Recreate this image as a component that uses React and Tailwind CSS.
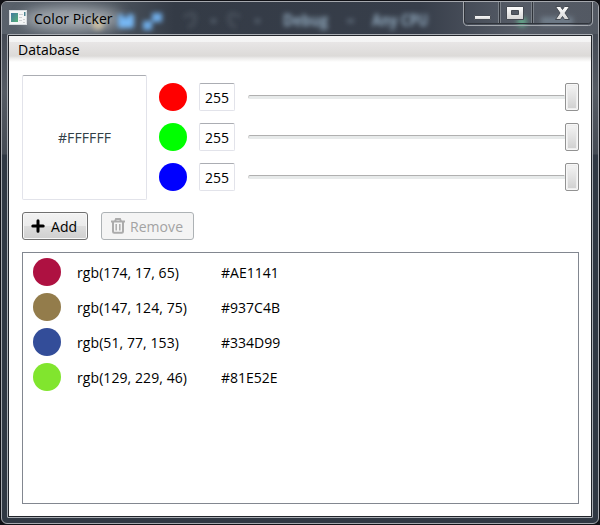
import React from 'react';

const channels = [
  { name: 'Red', fill: 'bg-[#ff0000]' },
  { name: 'Green', fill: 'bg-[#00ff00]' },
  { name: 'Blue', fill: 'bg-[#0000ff]' },
];

const colors = [
  { rgb: 'rgb(174, 17, 65)', hex: '#AE1141', fill: 'bg-[#ae1141]' },
  { rgb: 'rgb(147, 124, 75)', hex: '#937C4B', fill: 'bg-[#937c4b]' },
  { rgb: 'rgb(51, 77, 153)', hex: '#334D99', fill: 'bg-[#334d99]' },
  { rgb: 'rgb(129, 229, 46)', hex: '#81E52E', fill: 'bg-[#81e52e]' },
];

function AppIcon() {
  return (
    <svg width="18" height="16" viewBox="0 0 18 16" className="shrink-0">
      <defs>
        <linearGradient id="app" x1="0" y1="0" x2="1" y2="1">
          <stop offset="0" stopColor="#427aa0" />
          <stop offset="1" stopColor="#55b078" />
        </linearGradient>
      </defs>
      <rect x="0.5" y="0.5" width="17" height="14" fill="#f4f5f6" stroke="#d5dade" />
      <rect x="2" y="3" width="7" height="9" fill="url(#app)" />
      <path d="M10 4.500h4M10 7.500h3M10 10.500h3M14 9.500h2M14 12.500h2" stroke="#cdd0d3" />
      <path d="M15 2h1.500v4H15z" fill="#4b8390" />
    </svg>
  );
}

// Blurred toolbar of the window behind, seen through the glass title bar.
function GlassBackdrop() {
  return (
    <svg width="596" height="32" viewBox="2 2 596 32" className="absolute left-0 top-0">
      <defs>
        <filter id="soft" x="-50%" y="-100%" width="200%" height="300%"><feGaussianBlur stdDeviation="2.5" /></filter>
        <filter id="wide" x="-50%" y="-100%" width="200%" height="300%"><feGaussianBlur stdDeviation="7" /></filter>
      </defs>
      <ellipse cx="72" cy="19" rx="50" ry="12" fill="#b5bbc1" opacity=".85" filter="url(#wide)" />
      <g filter="url(#soft)">
        <circle cx="98" cy="24" r="6" fill="#d5c6a5" opacity=".8" />
        <rect x="118" y="14" width="16" height="14" rx="2" fill="#77b8f5" />
        <path d="M122 14h7v4h-7z" fill="#48627c" />
        <rect x="143" y="21" width="9" height="9" fill="#70aeea" />
        <rect x="152" y="13" width="10" height="9" fill="#70aeea" />
        <path d="M184 17q11-7 11 1t-7 9M240 17q-11-7-11 1t7 9" fill="none" stroke="#606976" strokeWidth="3" opacity=".5" />
        <path d="M211 19h5v4h-5zM255 19h5v4h-5zM347 19h7v4h-7z" fill="#70808f" opacity=".6" />
      </g>
      <g filter="url(#soft)" fill="#91a9bd" fontFamily="Open Sans, sans-serif" fontSize="16" fontWeight="700">
        <text x="283" y="26" textLength="45" lengthAdjust="spacingAndGlyphs">Debug</text>
        <text x="372" y="26" textLength="56" lengthAdjust="spacingAndGlyphs">Any CPU</text>
      </g>
      <g filter="url(#soft)">
        <circle cx="522" cy="22" r="5" fill="#68b994" opacity=".8" />
        <rect x="541" y="17" width="32" height="8" fill="#8d9fb0" opacity=".5" />
      </g>
    </svg>
  );
}

function WindowControls() {
  return (
    <svg width="130" height="26" viewBox="463 1 130 26" className="absolute left-[461px] top-[-1px]">
      <defs>
        <linearGradient id="glyph" x1="0" y1="0" x2="0" y2="1">
          <stop offset="0" stopColor="#fff" />
          <stop offset="1" stopColor="#d5d5d5" />
        </linearGradient>
      </defs>
      <path d="M463.500 1v20q0 4.500 4 4.500h121q4 0 4-4.500V1" fill="none" stroke="#a4a8ae" />
      <path d="M464.500 2v19q0 2.500 3 2.500h121q3 0 3-2.500V2M499.500 2v21M532.500 2v21" fill="none" stroke="#30343b" />
      <path d="M498.500 2v21M500.500 2v21M531.500 2v21M533.500 2v21" stroke="#7b8189" />
      <rect x="474.500" y="15.500" width="16" height="4" rx=".5" fill="url(#glyph)" stroke="#4a4f57" />
      <path d="M506.500 6.500h17v13h-17zM511.500 10.500v4h7v-4z" fillRule="evenodd" fill="url(#glyph)" stroke="#454a52" />
      <path d="M555.500 6.500h5l2 3 2-3h5l-4.500 6.500 4.500 6.500h-5l-2-3-2 3h-5l4.500-6.500z" fill="url(#glyph)" stroke="#454a52" />
    </svg>
  );
}

function PlusIcon() {
  return (
    <svg width="14" height="14" viewBox="0 0 14 14" className="shrink-0">
      <path d="M7 1.800v10.400M1.800 7h10.400" stroke="black" strokeWidth="3" strokeLinecap="round" />
    </svg>
  );
}

function TrashIcon() {
  return (
    <svg width="14" height="16" viewBox="0 0 14 16" className="shrink-0" fill="none" stroke="#ababab">
      <path d="M0 3.500h14" strokeWidth="2" />
      <path d="M4 3.500L5 1h4l1 2.500M2 4v9.500q0 1.200 1.200 1.200h7.600q1.200 0 1.200-1.200V4" strokeWidth="2" />
      <path d="M5.200 6v6.500M8.800 6v6.500" strokeWidth="1.500" />
    </svg>
  );
}

function Channel({ name, fill }) {
  return (
    <div className="flex h-7 items-center">
      <span className={`size-7 rounded-full ${fill}`} />
      <input
        aria-label={name}
        readOnly
        value="255"
        className="ml-3 h-7 w-9 rounded-[2px] border border-[#e2e3ea] border-t-[#abadb3] bg-white p-0 text-center outline-none"
      />
      <div className="ml-[13px] flex h-7 flex-1 items-center">
        <div className="h-1 flex-1 rounded-l-[2px] border border-[#e7eaea] border-t-[#b0b0b0] border-l-[#cfcfcf] bg-[#e7eaea]" />
        <div className="h-7 w-[14px] rounded-[2px] border border-[#929292] bg-linear-to-b from-[#f6f6f6] to-[#cecece] shadow-[inset_0_0_0_1px_#f7f7f7,inset_0_0_0_2px_#eeeeee]" />
      </div>
    </div>
  );
}

export default function App() {
  return (
    <div className="h-[525px] w-[600px] overflow-hidden bg-[#101116] p-px font-['Open_Sans','Noto_Sans',sans-serif] text-[14px] leading-5 text-black">
      <div className="relative flex h-[523px] flex-col overflow-hidden rounded-[6px] border border-[#a5a8ae] bg-[linear-gradient(to_bottom,#3c424d_0px,#555b64_90px,#454b54_152px,#303843_153px,#303843_100%)] px-[5px] pb-[5px]">
        <div className="absolute inset-x-0 top-0 h-8 bg-[linear-gradient(to_right,#59616b_0%,#4d555f_18%,#343b46_29%,#373e4a_70%,#555b66_86%,#535963_100%)]" />
        <GlassBackdrop />
        <header className="relative flex h-8 shrink-0 items-center pl-[2px]">
          <AppIcon />
          <span className="ml-[7px] pt-px tracking-[0.04px]">Color Picker</span>
        </header>
        <WindowControls />

        <main className="relative flex min-h-0 flex-1 flex-col rounded-[1px] border border-[#a9adb3]">
          <div className="flex min-h-0 flex-1 flex-col border border-[#22252b] bg-white">
            <nav className="flex h-[26px] shrink-0 items-center bg-[linear-gradient(to_bottom,#f5f5f5_0px,#f4f4f4_6px,#e8e6e6_6px,#dcdad8_20px,#ebeae9_22px,#ffffff_26px)] pb-[2px] pl-[9px] pt-1">
              <span>Database</span>
            </nav>
            <section className="mt-[13px] flex h-[125px] pl-[13px] pr-3">
              <div className="flex w-[125px] items-center justify-center rounded-[2px] border border-[#e2e3ea] border-t-[#abadb3] tracking-[0.1px] text-[#324047]">#FFFFFF</div>
              <div className="ml-3 mt-2 flex flex-1 flex-col gap-3">
                {channels.map((channel) => <Channel key={channel.name} {...channel} />)}
              </div>
            </section>
            <div className="mt-3 flex gap-[13px] pl-[13px]">
              <button className="flex h-7 w-[66px] items-center rounded-[3px] border border-[#707070] bg-[linear-gradient(to_bottom,#f2f2f2_0%,#ebebeb_50%,#dddddd_50%,#cfcfcf_100%)] pl-2 shadow-[inset_0_0_0_1px_#f8f8f8]">
                <PlusIcon />
                <span className="ml-[6px] pt-px tracking-[0.1px]">Add</span>
              </button>
              <button disabled className="flex h-7 w-[93px] items-center rounded-[3px] border border-[#adb2b5] bg-[#f4f4f4] pl-[9px] text-[#a3a3a3]">
                <TrashIcon />
                <span className="ml-[5px] pt-px tracking-[0.05px]">Remove</span>
              </button>
            </div>
            <ul className="mb-3 ml-[13px] mr-3 mt-3 min-h-0 flex-1 border border-[#828790] pl-[10px] pt-[5px]">
              {colors.map((color) => (
                <li key={color.hex} className="mb-[7px] flex h-7 items-center">
                  <span className={`size-7 rounded-full ${color.fill}`} />
                  <span className="ml-4 w-36 pt-px tracking-[0.08px]">{color.rgb}</span>
                  <span className="pt-px">{color.hex}</span>
                </li>
              ))}
            </ul>
          </div>
        </main>
      </div>
    </div>
  );
}
